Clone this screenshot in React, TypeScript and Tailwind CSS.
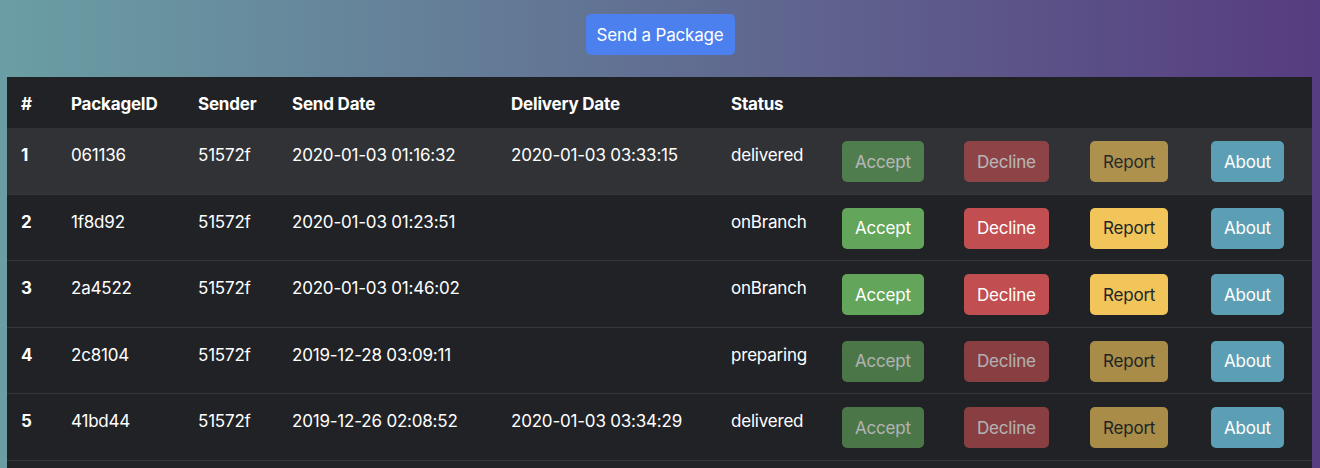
export default function App() {
  const rows = [
    { id: 1, pkg: "061136", sender: "51572f", sent: "2020-01-03 01:16:32", delivered: "2020-01-03 03:33:15", status: "delivered", active: false },
    { id: 2, pkg: "1f8d92", sender: "51572f", sent: "2020-01-03 01:23:51", delivered: "", status: "onBranch", active: true },
    { id: 3, pkg: "2a4522", sender: "51572f", sent: "2020-01-03 01:46:02", delivered: "", status: "onBranch", active: true },
    { id: 4, pkg: "2c8104", sender: "51572f", sent: "2019-12-28 03:09:11", delivered: "", status: "preparing", active: false },
    { id: 5, pkg: "41bd44", sender: "51572f", sent: "2019-12-26 02:08:52", delivered: "2020-01-03 03:34:29", status: "delivered", active: false },
  ]

  const btn = "h-[41px] px-[12px] pt-[1px] rounded-[5px] text-[17px] leading-[25px] border border-transparent"

  return (
    <div
      className="h-[468px] w-[1320px] bg-linear-to-r from-[#6a9ea4] via-[#616f92] to-[#563c80] text-white overflow-hidden tracking-[-0.2px]"
      style={{ fontFamily: "Inter, 'Liberation Sans', sans-serif" }}
    >
      {/* Top action */}
      <div className="flex justify-center pt-[14px] pb-[22px]">
        <button className="h-[41px] w-[149px] pt-[2px] rounded-[5px] bg-[#4b80ee] text-[17px] text-white">
          Send a Package
        </button>
      </div>

      {/* Packages table */}
      <div className="px-[7px]">
        <table className="w-[1305px] table-fixed border-collapse bg-[#212226] text-[17px] leading-[25px]">
          <thead>
            <tr className="text-left font-bold">
              <th className="w-[51px] px-[14px] pt-[15px] pb-[11px]">#</th>
              <th className="w-[127px] px-[13px] pt-[15px] pb-[11px]">PackageID</th>
              <th className="w-[94px] px-[13px] pt-[15px] pb-[11px]">Sender</th>
              <th className="w-[219px] px-[13px] pt-[15px] pb-[11px]">Send Date</th>
              <th className="w-[220px] px-[13px] pt-[15px] pb-[11px]">Delivery Date</th>
              <th className="w-[111px] px-[13px] pt-[15px] pb-[11px]">Status</th>
              <th className="w-[122px]"></th>
              <th className="w-[126px]"></th>
              <th className="w-[121px]"></th>
              <th className="w-[114px]"></th>
            </tr>
          </thead>
          <tbody>
            {rows.map((r, i) => (
              <tr key={r.id} className={i === 0 ? "bg-[#303236]" : "border-t border-[#34373c]"}>
                <td className="px-[14px] pt-[15px] align-top font-bold">{r.id}</td>
                <td className="px-[13px] pt-[15px] align-top">{r.pkg}</td>
                <td className="px-[13px] pt-[15px] align-top">{r.sender}</td>
                <td className="px-[13px] pt-[15px] align-top">{r.sent}</td>
                <td className="px-[13px] pt-[15px] align-top">{r.delivered}</td>
                <td className="px-[13px] pt-[15px] align-top">{r.status}</td>
                <td className="px-[13px] pt-[13px] pb-[11.5px] align-top">
                  <button className={`${btn} bg-[#62a55b] text-white ${r.active ? "" : "opacity-[0.65]"}`}>Accept</button>
                </td>
                <td className="px-[13px] pt-[13px] pb-[11.5px] align-top">
                  <button className={`${btn} bg-[#c14e50] text-white ${r.active ? "" : "opacity-[0.65]"}`}>Decline</button>
                </td>
                <td className="px-[13px] pt-[13px] pb-[11.5px] align-top">
                  <button className={`${btn} bg-[#f1c55a] text-[#212529] ${r.active ? "" : "opacity-[0.65]"}`}>Report</button>
                </td>
                <td className="px-[13px] pt-[13px] pb-[11.5px] align-top">
                  <button className={`${btn} bg-[#5c9fb4] text-white`}>About</button>
                </td>
              </tr>
            ))}
            {/* table continues below the fold */}
            <tr className="border-t border-[#34373c]">
              <td colSpan={10} className="h-[66px]"></td>
            </tr>
          </tbody>
        </table>
      </div>
    </div>
  )
}
